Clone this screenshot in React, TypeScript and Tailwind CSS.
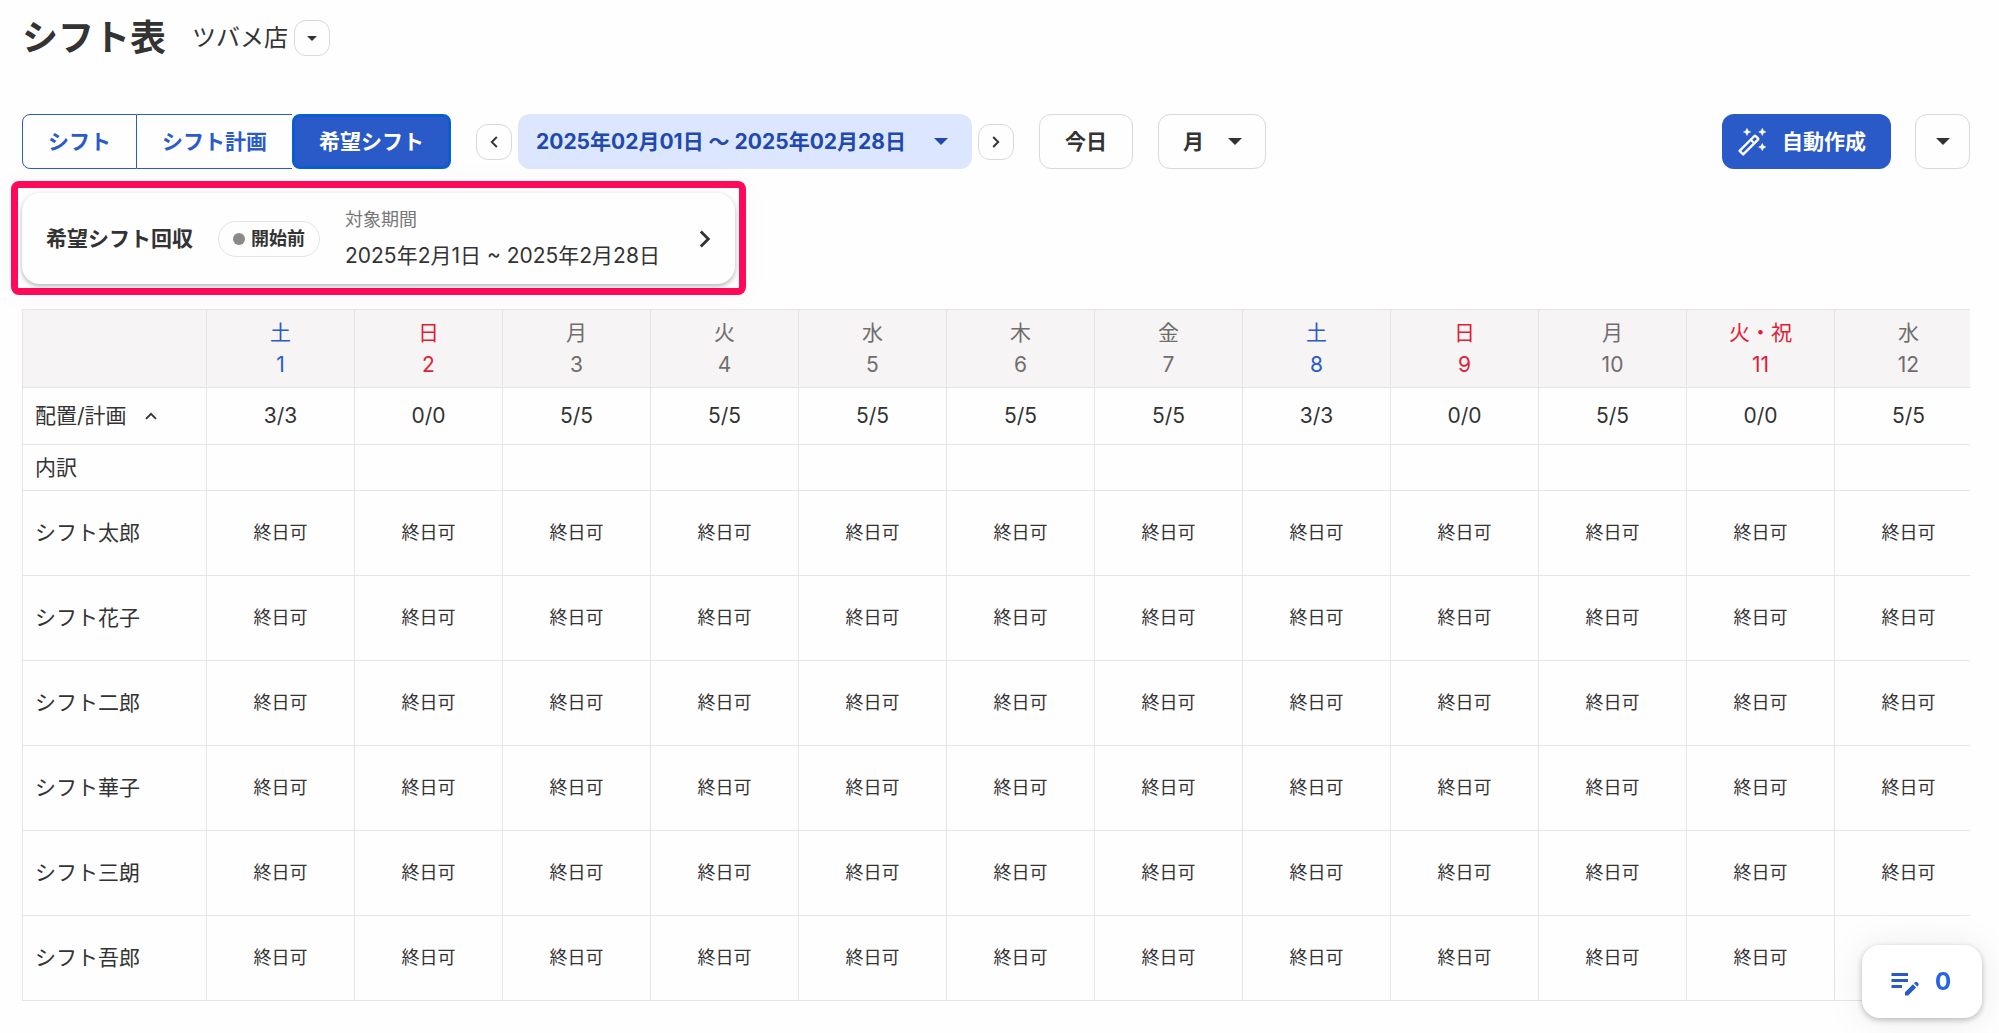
import clsx from 'clsx';
import { MdEditNote } from 'react-icons/md';

type Day = {
  label: string;
  date: number;
  count: string;
  tone?: 'saturday' | 'holiday';
};

const days: Day[] = [
  { label: '土', date: 1, count: '3/3', tone: 'saturday' },
  { label: '日', date: 2, count: '0/0', tone: 'holiday' },
  { label: '月', date: 3, count: '5/5' },
  { label: '火', date: 4, count: '5/5' },
  { label: '水', date: 5, count: '5/5' },
  { label: '木', date: 6, count: '5/5' },
  { label: '金', date: 7, count: '5/5' },
  { label: '土', date: 8, count: '3/3', tone: 'saturday' },
  { label: '日', date: 9, count: '0/0', tone: 'holiday' },
  { label: '月', date: 10, count: '5/5' },
  { label: '火・祝', date: 11, count: '0/0', tone: 'holiday' },
  { label: '水', date: 12, count: '5/5' },
];

const members = [
  'シフト太郎',
  'シフト花子',
  'シフト二郎',
  'シフト華子',
  'シフト三朗',
  'シフト吾郎',
];

const Caret = ({ className = 'w-3.5' }: { className?: string }) => (
  <svg viewBox="0 0 14 7" className={className} aria-hidden="true">
    <path d="M0 0h14L7 7z" fill="currentColor" />
  </svg>
);

const Chevron = ({ className }: { className?: string }) => (
  <svg viewBox="0 0 8 12" className={className} aria-hidden="true">
    <path
      d="M1.2 1 6.2 6l-5 5"
      fill="none"
      stroke="currentColor"
      strokeWidth="1.9"
    />
  </svg>
);

const Wand = () => (
  <svg viewBox="0 0 28 28" className="size-7" aria-hidden="true">
    <g fill="none" stroke="currentColor" strokeWidth="2.4">
      <path
        d="M1.6 22.8 16.4 8q.6-.6 1.2 0l2.4 2.4q.6.6 0 1.2L5.2 26.4z"
        strokeLinejoin="round"
      />
      <path d="m12.8 11.8 3.4 3.4" strokeWidth="2" />
    </g>
    <path
      d="m9 .2 1.2 2.5 2.5 1.2-2.5 1.2L9 7.6 7.8 5.1 5.3 3.9l2.5-1.2zM24.3.2l1.2 2.5L28 3.9l-2.5 1.2-1.2 2.5-1.2-2.5-2.5-1.2 2.5-1.2zM24.3 15.3l1.2 2.5L28 19l-2.5 1.2-1.2 2.5-1.2-2.5-2.5-1.2 2.5-1.2z"
      fill="currentColor"
      stroke="currentColor"
      strokeWidth=".4"
    />
  </svg>
);

const Toolbar = () => (
  <div className="flex items-center justify-between">
    <div className="flex items-center gap-[25px] font-bold">
      <div className="flex h-[55px] text-[#2a5bc8]">
        <button
          type="button"
          className="rounded-l-lg border border-[#2a5bc8] px-[25px]"
        >
          シフト
        </button>
        <button
          type="button"
          className="border-y border-[#2a5bc8] px-[25px]"
        >
          シフト計画
        </button>
        <button
          type="button"
          aria-pressed="true"
          className="rounded-lg border-3 border-[#0a5fd0] bg-[#2a5ac7] px-6 text-white"
        >
          希望シフト
        </button>
      </div>

      <div className="flex items-center gap-1.5">
        <button
          type="button"
          aria-label="前の期間"
          className="flex size-9 items-center justify-center rounded-xl border border-[#d9d9d9]"
        >
          <Chevron className="w-2 rotate-180" />
        </button>
        <button
          type="button"
          className="flex h-[55px] items-center gap-7 rounded-xl bg-[#dce7ff] pr-6 pl-[18px] text-[#2149ad]"
        >
          2025年02月01日 〜 2025年02月28日
          <Caret />
        </button>
        <button
          type="button"
          aria-label="次の期間"
          className="flex size-9 items-center justify-center rounded-xl border border-[#d9d9d9]"
        >
          <Chevron className="w-2" />
        </button>
      </div>

      <button
        type="button"
        className="h-[55px] rounded-xl border border-[#d9d9d9] px-[25px]"
      >
        今日
      </button>
      <button
        type="button"
        className="flex h-[55px] items-center gap-6 rounded-xl border border-[#d9d9d9] pr-[23px] pl-6"
      >
        月
        <Caret />
      </button>
    </div>

    <div className="flex items-center gap-6 font-bold">
      <button
        type="button"
        className="flex h-[55px] items-center gap-4 rounded-xl bg-[#2a5ac7] pr-[25px] pl-4 text-white"
      >
        <Wand />
        自動作成
      </button>
      <button
        type="button"
        aria-label="その他の操作"
        className="flex size-[55px] items-center justify-center rounded-xl border border-[#d9d9d9]"
      >
        <Caret />
      </button>
    </div>
  </div>
);

const CollectionCard = () => (
  <div className="-ml-[11px] w-fit rounded-lg border-7 border-[#ff0a5a] px-1 pt-[5px] pb-1 shadow-[0_2px_30px_rgba(0,0,0,0.03)]">
    <button
      type="button"
      className="flex h-[91px] items-center gap-[25px] rounded-[18px] px-6 text-left shadow-[0_2px_5px_rgba(0,0,0,0.3)]"
    >
      <span className="font-bold">希望シフト回収</span>
      <span className="flex h-9 items-center gap-1.5 rounded-full border border-[#e4e4e4] px-3.5 text-lg font-bold">
        <span className="size-3 rounded-full bg-[#8c8989]" />
        開始前
      </span>
      <span className="flex flex-col pb-0.5">
        <span className="text-lg leading-9 text-[#777]">対象期間</span>
        <span className="leading-9">2025年2月1日 ~ 2025年2月28日</span>
      </span>
      <Chevron className="ml-3.5 w-3" />
    </button>
  </div>
);

const cell = 'border-r border-b border-[#e5e5e5]';

const ShiftTable = () => (
  <div className="mt-0.5 overflow-hidden">
    <table className="w-[1961px] table-fixed border-separate border-spacing-0 border-t border-l border-[#e5e5e5]">
      <thead className="bg-[#f6f4f5]">
        <tr className="h-[78px]">
          <td className={clsx(cell, 'w-[184px]')} />
          {days.map(({ label, date, tone }) => (
            <th
              key={date}
              scope="col"
              className={clsx(
                cell,
                'w-[148px] leading-8 font-normal',
                tone === 'saturday' && 'text-[#2a5bc8]',
                tone === 'holiday' && 'text-[#e01e37]',
                !tone && 'text-[#706d6d]'
              )}
            >
              <div>{label}</div>
              <div>{date}</div>
            </th>
          ))}
        </tr>
      </thead>
      <tbody>
        <tr className="h-[57px]">
          <th scope="row" className={clsx(cell, 'px-3 text-left font-normal')}>
            <button type="button" className="flex items-center gap-5">
              配置/計画
              <Chevron className="w-2 -rotate-90" />
            </button>
          </th>
          {days.map(({ date, count }) => (
            <td key={date} className={clsx(cell, 'text-center')}>
              {count}
            </td>
          ))}
        </tr>
        <tr className="h-[46px]">
          <th scope="row" className={clsx(cell, 'px-3 text-left font-normal')}>
            内訳
          </th>
          {days.map(({ date }) => (
            <td key={date} className={cell} />
          ))}
        </tr>
        {members.map((name) => (
          <tr key={name} className="h-[85px]">
            <th
              scope="row"
              className={clsx(cell, 'px-3 text-left font-normal')}
            >
              {name}
            </th>
            {days.map(({ date }) => (
              <td key={date} className={clsx(cell, 'text-center text-lg')}>
                終日可
              </td>
            ))}
          </tr>
        ))}
      </tbody>
    </table>
  </div>
);

export default function App() {
  return (
    <main className="min-h-screen bg-[#fefefe] pr-[29px] pl-[22px] font-[Inter,'Noto_Sans_CJK_JP',sans-serif] text-[21px] leading-8 text-[#333]">
      <header className="flex h-[114px] items-start pt-3">
        <h1 className="text-4xl leading-[52px] font-bold">シフト表</h1>
        <div className="ml-[26px] flex h-[52px] items-center gap-1.5">
          <span className="text-2xl">ツバメ店</span>
          <button
            type="button"
            aria-label="店舗を選択"
            className="flex size-9 items-center justify-center rounded-xl border border-[#d9d9d9]"
          >
            <Caret className="w-2.5" />
          </button>
        </div>
      </header>

      <div className="flex flex-col gap-3">
        <Toolbar />
        <CollectionCard />
        <ShiftTable />
      </div>

      <button
        type="button"
        className="fixed right-[17px] bottom-[15px] flex h-[73px] w-[120px] items-center gap-3 rounded-[18px] bg-white pl-[25px] text-2xl font-bold text-[#2563eb] shadow-[0_2px_6px_rgba(0,0,0,0.25),0_2px_40px_rgba(0,0,0,0.08)]"
      >
        <MdEditNote className="size-9 text-[#2a5ac7]" />0
      </button>
    </main>
  );
}
